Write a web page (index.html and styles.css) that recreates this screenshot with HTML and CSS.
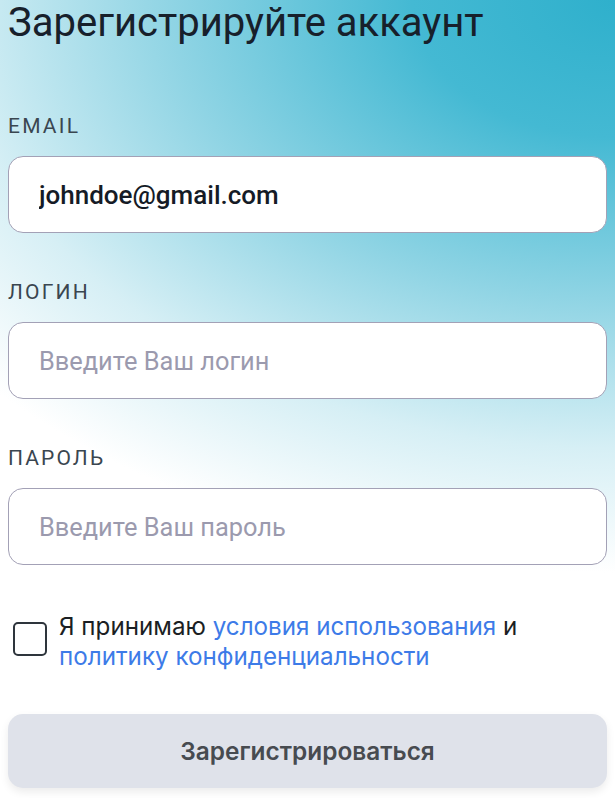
FILE: index.html
```html
<!DOCTYPE html>
<html lang="ru">
<head>
<meta charset="utf-8">
<title>Регистрация</title>
<link rel="stylesheet" href="styles.css">
</head>
<body>
<main class="page">
  <h1 class="title">Зарегистрируйте аккаунт</h1>
  <form class="form">
    <div class="field">
      <label class="label" for="email">EMAIL</label>
      <input class="input input-filled" id="email" type="email" value="johndoe@gmail.com">
    </div>
    <div class="field">
      <label class="label" for="login">ЛОГИН</label>
      <input class="input" id="login" type="text" placeholder="Введите Ваш логин">
    </div>
    <div class="field">
      <label class="label" for="pass">ПАРОЛЬ</label>
      <input class="input" id="pass" type="password" placeholder="Введите Ваш пароль">
    </div>
    <div class="agree">
      <span class="checkbox"></span>
      <p class="agree-text">Я принимаю <a href="#" class="link">условия использования</a> и <a href="#" class="link">политику конфиденциальности</a></p>
    </div>
    <button type="button" class="submit">Зарегистрироваться</button>
  </form>
</main>
</body>
</html>
```

FILE: styles.css
```css
html, body {
  margin: 0;
  padding: 0;
  height: 100%;
}
body {
  background: radial-gradient(ellipse 150% 78% at 100% 0%, #2fb0cc 0%, #44b9d3 22%, #8fd4e4 48%, #d6eff5 72%, #ffffff 92%);
  background-color: #fff;
  font-family: Roboto, "Noto Sans", sans-serif;
}
.page {
  padding: 0 8px;
}
.title {
  margin: 0 0 68px;
  font-size: 40px;
  line-height: 46px;
  font-weight: 400;
  color: #17202b;
}
.form {
  display: flex;
  flex-direction: column;
}
.field {
  display: flex;
  flex-direction: column;
  margin-bottom: 47px;
}
.label {
  font-size: 21px;
  line-height: 24px;
  letter-spacing: 2.2px;
  color: #3a4650;
  margin-bottom: 18px;
}
.input {
  box-sizing: border-box;
  height: 77px;
  width: 100%;
  border: 1.5px solid #a3a1b6;
  border-radius: 15px;
  background: #fff;
  padding: 0 30px;
  font-family: Roboto, sans-serif;
  font-size: 25.4px;
  font-weight: 400;
  color: #151b26;
  outline: none;
}
.input-filled {
  font-size: 26px;
  font-weight: 500;
}
.input::placeholder {
  color: #9b9aae;
  font-weight: 400;
}
.agree {
  display: flex;
  align-items: flex-start;
  gap: 12px;
  padding-left: 5px;
}
.checkbox {
  flex: none;
  box-sizing: border-box;
  width: 34px;
  height: 34px;
  margin-top: 10px;
  border: 2px solid #2e353c;
  border-radius: 5px;
  background: #fff;
}
.agree-text {
  margin: 0;
  font-family: Inter, sans-serif;
  font-size: 24.2px;
  line-height: 30px;
  color: #1b1f24;
}
.link {
  color: #3d7be8;
  text-decoration: none;
}
.submit {
  margin-top: 42px;
  height: 74px;
  width: 100%;
  border: none;
  border-radius: 15px;
  background: #dfe2ea;
  box-shadow: 0 4px 8px rgba(0, 0, 0, 0.08);
  font-family: Inter, sans-serif;
  font-size: 24.4px;
  font-weight: 600;
  color: #474b50;
}
```
